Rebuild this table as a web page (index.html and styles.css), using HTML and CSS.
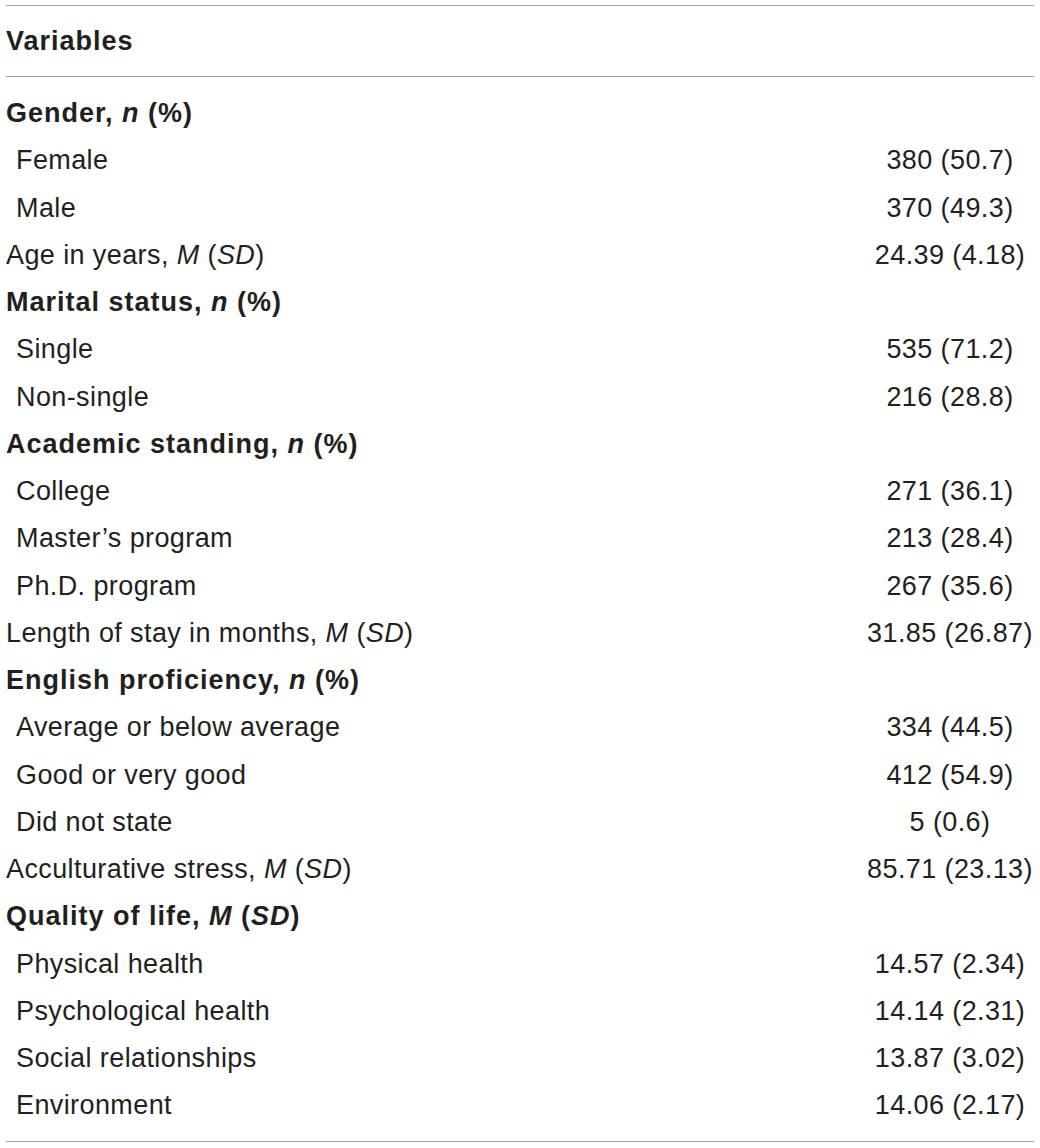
FILE: index.html
```html
<!DOCTYPE html>
<html lang="en">
<head>
<meta charset="utf-8">
<title>Table</title>
<link rel="stylesheet" href="styles.css">
</head>
<body>
<table class="data">
  <thead>
    <tr><th class="label head">Variables</th><th class="value"></th></tr>
  </thead>
  <tbody>
    <tr class="first"><td class="label group">Gender, <i>n</i> (%)</td><td class="value"></td></tr>
    <tr><td class="label sub">Female</td><td class="value">380 (50.7)</td></tr>
    <tr><td class="label sub">Male</td><td class="value">370 (49.3)</td></tr>
    <tr><td class="label">Age in years, <i>M</i> (<i>SD</i>)</td><td class="value">24.39 (4.18)</td></tr>
    <tr><td class="label group">Marital status, <i>n</i> (%)</td><td class="value"></td></tr>
    <tr><td class="label sub">Single</td><td class="value">535 (71.2)</td></tr>
    <tr><td class="label sub">Non-single</td><td class="value">216 (28.8)</td></tr>
    <tr><td class="label group">Academic standing, <i>n</i> (%)</td><td class="value"></td></tr>
    <tr><td class="label sub">College</td><td class="value">271 (36.1)</td></tr>
    <tr><td class="label sub">Master’s program</td><td class="value">213 (28.4)</td></tr>
    <tr><td class="label sub">Ph.D. program</td><td class="value">267 (35.6)</td></tr>
    <tr><td class="label">Length of stay in months, <i>M</i> (<i>SD</i>)</td><td class="value">31.85 (26.87)</td></tr>
    <tr><td class="label group">English proficiency, <i>n</i> (%)</td><td class="value"></td></tr>
    <tr><td class="label sub">Average or below average</td><td class="value">334 (44.5)</td></tr>
    <tr><td class="label sub">Good or very good</td><td class="value">412 (54.9)</td></tr>
    <tr><td class="label sub">Did not state</td><td class="value">5 (0.6)</td></tr>
    <tr><td class="label">Acculturative stress, <i>M</i> (<i>SD</i>)</td><td class="value">85.71 (23.13)</td></tr>
    <tr><td class="label group">Quality of life, <i>M</i> (<i>SD</i>)</td><td class="value"></td></tr>
    <tr><td class="label sub">Physical health</td><td class="value">14.57 (2.34)</td></tr>
    <tr><td class="label sub">Psychological health</td><td class="value">14.14 (2.31)</td></tr>
    <tr><td class="label sub">Social relationships</td><td class="value">13.87 (3.02)</td></tr>
    <tr class="last"><td class="label sub">Environment</td><td class="value">14.06 (2.17)</td></tr>
  </tbody>
</table>
</body>
</html>
```

FILE: styles.css
```css
html, body {
  margin: 0;
  padding: 0;
  background: #ffffff;
}

body {
  padding: 5px 0 0 6px;
  font-family: "Liberation Sans", Arial, Helvetica, sans-serif;
  color: #231f20;
}

.data {
  width: 1028px;
  border-collapse: collapse;
  border-top: 1px solid #a3a3a3;
  border-bottom: 1px solid #a3a3a3;
  font-size: 27px;
  letter-spacing: 0.4px;
}

.data thead tr {
  border-bottom: 1px solid #a3a3a3;
}

.data th,
.data td {
  padding: 0;
  font-weight: normal;
  line-height: 31px;
}

.data th {
  height: 70px;
  text-align: left;
}

.data td {
  height: 47.25px;
}

.data tbody tr.first td {
  padding-top: 13px;
}

.data tbody tr.last td {
  padding-bottom: 11px;
}

.label {
  text-align: left;
  white-space: nowrap;
}

.head,
.group {
  font-weight: bold !important;
  letter-spacing: 1px;
}

.sub {
  padding-left: 10px !important;
}

.value {
  width: 168px;
  text-align: center;
  white-space: nowrap;
}
```
